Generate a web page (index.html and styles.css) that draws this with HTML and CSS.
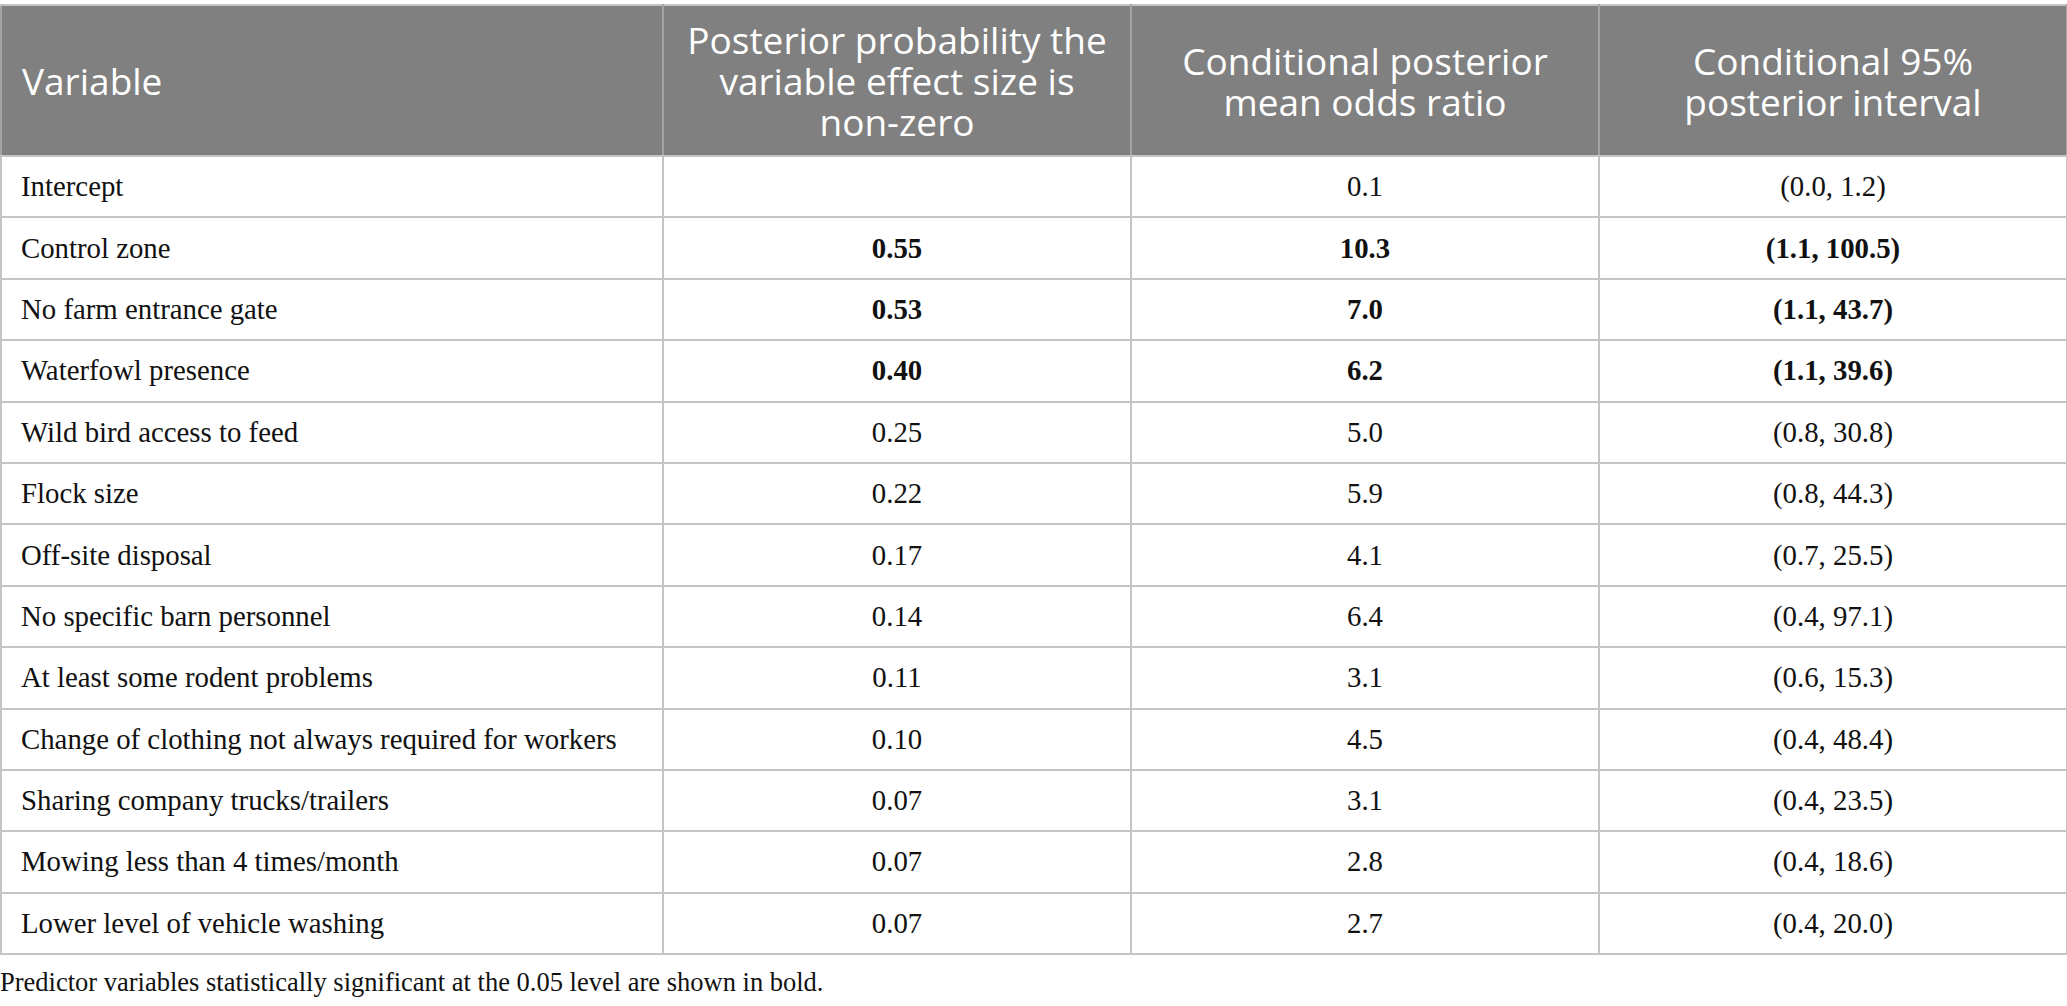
FILE: index.html
```html
<!DOCTYPE html>
<html lang="en">
<head>
    <meta charset="UTF-8">
    <title>Posterior probabilities</title>
    <link rel="stylesheet" href="styles.css">
</head>
<body>
    <table class="results">
        <colgroup>
            <col class="col-var">
            <col class="col-num">
            <col class="col-num">
            <col class="col-num">
        </colgroup>
        <thead>
            <tr>
                <th class="left">Variable</th>
                <th>Posterior probability the variable effect size is <span class="nobr">non-zero</span></th>
                <th>Conditional posterior mean odds ratio</th>
                <th><span class="nobr">Conditional 95%</span> posterior interval</th>
            </tr>
        </thead>
        <tbody>
            <tr><td>Intercept</td><td></td><td>0.1</td><td>(0.0, 1.2)</td></tr>
            <tr class="sig"><td>Control zone</td><td>0.55</td><td>10.3</td><td>(1.1, 100.5)</td></tr>
            <tr class="sig"><td>No farm entrance gate</td><td>0.53</td><td>7.0</td><td>(1.1, 43.7)</td></tr>
            <tr class="sig"><td>Waterfowl presence</td><td>0.40</td><td>6.2</td><td>(1.1, 39.6)</td></tr>
            <tr><td>Wild bird access to feed</td><td>0.25</td><td>5.0</td><td>(0.8, 30.8)</td></tr>
            <tr><td>Flock size</td><td>0.22</td><td>5.9</td><td>(0.8, 44.3)</td></tr>
            <tr><td>Off-site disposal</td><td>0.17</td><td>4.1</td><td>(0.7, 25.5)</td></tr>
            <tr><td>No specific barn personnel</td><td>0.14</td><td>6.4</td><td>(0.4, 97.1)</td></tr>
            <tr><td>At least some rodent problems</td><td>0.11</td><td>3.1</td><td>(0.6, 15.3)</td></tr>
            <tr><td>Change of clothing not always required for workers</td><td>0.10</td><td>4.5</td><td>(0.4, 48.4)</td></tr>
            <tr><td>Sharing company trucks/trailers</td><td>0.07</td><td>3.1</td><td>(0.4, 23.5)</td></tr>
            <tr><td>Mowing less than 4 times/month</td><td>0.07</td><td>2.8</td><td>(0.4, 18.6)</td></tr>
            <tr><td>Lower level of vehicle washing</td><td>0.07</td><td>2.7</td><td>(0.4, 20.0)</td></tr>
        </tbody>
    </table>
    <p class="note">Predictor variables statistically significant at the 0.05 level are shown in bold.</p>
</body>
</html>
```

FILE: styles.css
```css
body {
    margin: 0;
    padding-top: 4px;
    background-color: #fff;
    color: #111;
    font-family: "Liberation Serif", "Times New Roman", serif;
}

.results {
    width: 2066px;
    border-collapse: collapse;
    table-layout: fixed;
    border: 2px solid #c4c4c4;
}

.col-var {
    width: 662px;
}

.col-num {
    width: 468px;
}

.results th {
    height: 149px;
    padding: 0 14px 0 20px;
    background-color: #7f807f;
    color: #fff;
    font-family: "Open Sans", "Noto Sans", sans-serif;
    font-weight: 400;
    font-size: 37px;
    line-height: 41px;
    text-align: center;
    vertical-align: middle;
    border: 2px solid #a3a3a3;
    border-top-color: #c4c4c4;
    border-bottom-color: #c4c4c4;
}

.results th + th {
    padding: 0 14px;
}

.results th.left {
    text-align: left;
}

.nobr {
    white-space: nowrap;
}

.results td {
    height: 59.4px;
    padding: 0 19px;
    font-size: 28.8px;
    text-align: center;
    vertical-align: middle;
    border: 2px solid #c4c4c4;
}

.results td:first-child {
    text-align: left;
}

.results tr.sig td {
    font-weight: bold;
}

.results tr.sig td:first-child {
    font-weight: normal;
}

.note {
    margin: 12px 0 0;
    font-size: 26.5px;
}
```
